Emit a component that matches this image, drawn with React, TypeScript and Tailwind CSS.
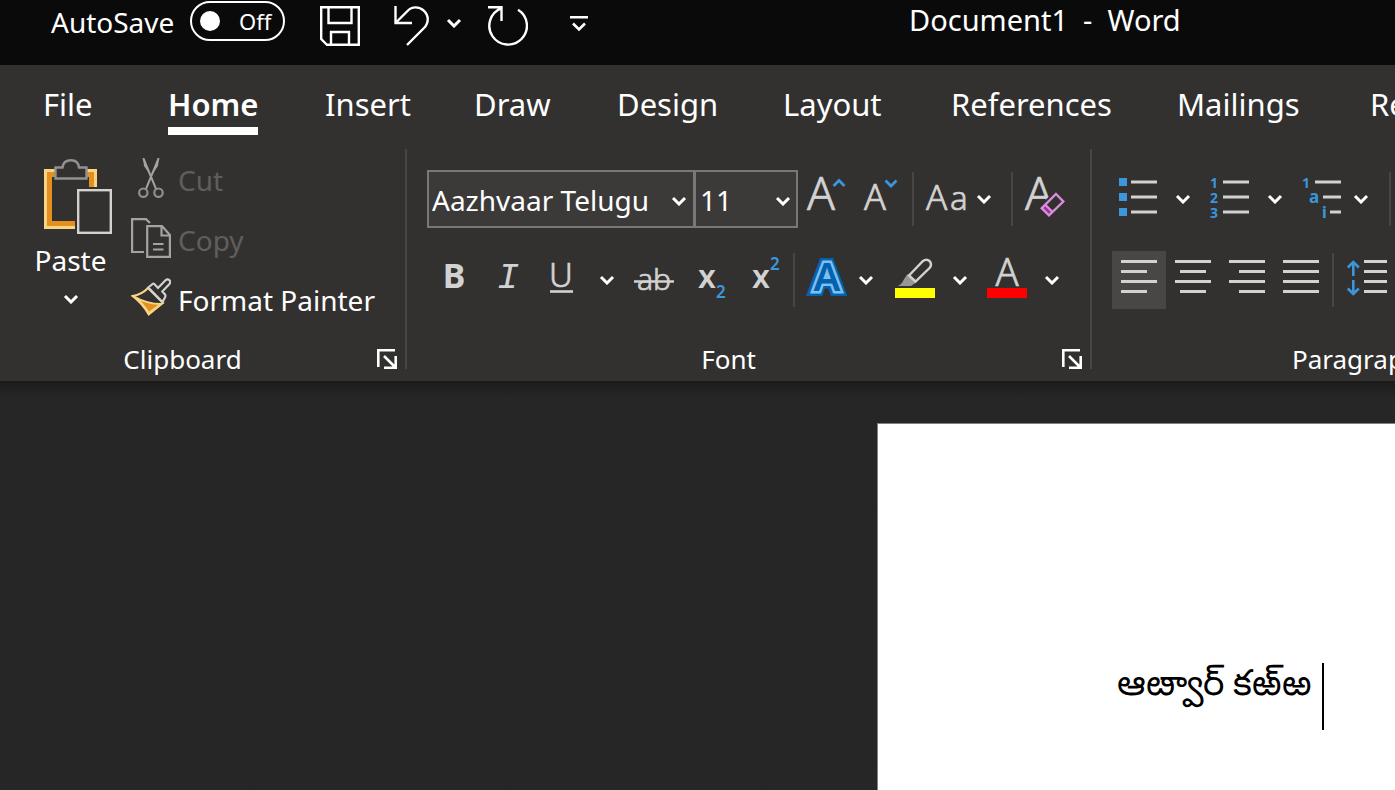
import React, { useState } from "react";

type IconProps = { children: React.ReactNode; className?: string };

/** Ribbon glyph on a 40x44 canvas. */
function Glyph({ children, className = "" }: IconProps) {
  return (
    <svg
      aria-hidden="true"
      width="40"
      height="44"
      viewBox="0 0 40 44"
      fill="none"
      className={`shrink-0 overflow-visible ${className}`}
    >
      {children}
    </svg>
  );
}

type LetterProps = { x: number; y: number; size: number; anchor?: "start" | "middle"; children: string };

/** Light-weight grey letter used inside ribbon glyphs. */
function Letter({ x, y, size, anchor = "start", children }: LetterProps) {
  return (
    <text x={x} y={y} fontSize={size} fontWeight="300" textAnchor={anchor} fill="#d2d2d2" stroke="#d2d2d2" strokeWidth="0.7">
      {children}
    </text>
  );
}

function Chevron({ className = "" }: { className?: string }) {
  return (
    <svg aria-hidden="true" width="16" height="10" viewBox="0 0 16 10" fill="none" className={`shrink-0 ${className}`}>
      <path d="M2 2L8 8L14 2" stroke="#fff" strokeWidth="3" />
    </svg>
  );
}

function Tool({ label, children, active = false }: { label: string; children: React.ReactNode; active?: boolean }) {
  return (
    <button
      type="button"
      aria-label={label}
      className={`flex h-[58px] w-[54px] shrink-0 items-center justify-center ${active ? "bg-[#484746]" : ""}`}
    >
      {children}
    </button>
  );
}

function More({ label, narrow = false }: { label: string; narrow?: boolean }) {
  return (
    <button
      type="button"
      aria-label={label}
      className={`flex h-14 shrink-0 items-center justify-center ${narrow ? "w-6" : "w-9"}`}
    >
      <Chevron />
    </button>
  );
}

function Divider() {
  return <div className="h-[54px] w-0.5 shrink-0 bg-[#484644]" />;
}

function Group({ title, className, children }: { title: string; className: string; children: React.ReactNode }) {
  return (
    <section aria-label={title} className={`flex h-[220px] shrink-0 flex-col border-r-2 border-[#484644] ${className}`}>
      <div className="flex-1">{children}</div>
      <div className="flex h-5 items-center">
        <h2 className="flex-1 text-center text-[26px] leading-5">{title}</h2>
        <button type="button" aria-label={`${title} settings`} className="mr-2 ml-3 h-5 w-5">
          <svg aria-hidden="true" width="20" height="20" viewBox="0 0 20 20" fill="none" stroke="#fff" strokeWidth="2.6">
            <path d="M1.300 18V1.300H18M18.700 7V18.700H7M7 7L18 18" />
          </svg>
        </button>
      </div>
    </section>
  );
}

const tabs = [
  { name: "File", width: "w-[125px]" },
  { name: "Home", width: "w-[157px]" },
  { name: "Insert", width: "w-[149px]" },
  { name: "Draw", width: "w-[143px]" },
  { name: "Design", width: "w-[166px]" },
  { name: "Layout", width: "w-[168px]" },
  { name: "References", width: "w-[226px]" },
  { name: "Mailings", width: "w-[193px]" },
  { name: "Review", width: "w-[150px]" },
];

function TitleBar() {
  const [autoSave, setAutoSave] = useState(false);
  return (
    <header className="flex h-[65px] shrink-0 items-start bg-[#0a0a0a]">
      <div className="flex h-[42px] shrink-0 items-center pl-[51px]">
        <span id="autosave" className="w-[139px] pt-0.5 text-[28px]">AutoSave</span>
        <button
          type="button"
          role="switch"
          aria-checked={autoSave}
          aria-labelledby="autosave"
          onClick={() => setAutoSave(!autoSave)}
          className="flex h-10 w-[95px] items-center gap-[19px] rounded-full border-2 border-white pl-2 text-[22px]"
        >
          <span className="h-5 w-5 rounded-full bg-white" />
          {autoSave ? "On" : "Off"}
        </button>
      </div>
      <div className="flex h-[52px] shrink-0 items-center pl-[35px]">
        <button type="button" aria-label="Save">
          <svg aria-hidden="true" width="40" height="40" viewBox="0 0 40 40" fill="none" stroke="#fff" strokeWidth="2.4">
            <path d="M1.200 1.200H38.800V38.800H7L1.200 33Z M8.500 1V17H31.500V1 M11 39V26H29V39" />
          </svg>
        </button>
        <button type="button" aria-label="Undo" className="ml-[34px]">
          <svg aria-hidden="true" width="36" height="40" viewBox="0 0 36 40" fill="none" stroke="#fff" strokeWidth="2.4">
            <path d="M1.500 0V17H18M2 16.500L13.500 5C18 .2 25 .2 30 4.800S35 17 30 22L13 39" />
          </svg>
        </button>
        <button type="button" aria-label="Undo history" className="ml-4 flex h-10 items-center pb-1.5">
          <Chevron />
        </button>
        <button type="button" aria-label="Repeat" className="ml-[26px]">
          <svg aria-hidden="true" width="40" height="40" viewBox="0 0 40 40" fill="none" stroke="#fff" strokeWidth="2.4">
            <path d="M30 3.800A18.800 18.800 0 1 1 13 2.400M0 1.200H13.500V15" />
          </svg>
        </button>
        <button type="button" aria-label="Customize toolbar" className="ml-[41px] flex h-10 items-center pb-1">
          <svg aria-hidden="true" width="20" height="18" viewBox="0 0 20 18" fill="none" stroke="#fff" strokeWidth="2.600">
            <path d="M1 2.300H19M4 8.500L10 14.500L16 8.500" />
          </svg>
        </button>
      </div>
      <h1 className="shrink-0 pl-[320px] text-[29px] leading-10 whitespace-pre">Document1  -  Word</h1>
    </header>
  );
}

function Tabs() {
  return (
    <nav aria-label="Ribbon tabs" className="flex h-[84px] items-start pt-[18px] pl-[43px]">
      {tabs.map((tab) => (
        <div key={tab.name} className={`shrink-0 ${tab.width}`}>
          <a
            href={`#${tab.name.toLowerCase()}`}
            className={`inline-block h-[52px] text-[31px] leading-[42px] ${
              tab.name === "Home" ? "border-b-8 border-white font-semibold" : ""
            }`}
          >
            {tab.name}
          </a>
        </div>
      ))}
    </nav>
  );
}

function Clipboard() {
  return (
    <Group title="Clipboard" className="w-[407px]">
      <div className="flex pt-px">
        <button type="button" className="flex w-[131px] shrink-0 flex-col items-center pt-[9px] pr-[14px] pl-6">
          <svg aria-hidden="true" width="68" height="76" viewBox="0 0 68 76" fill="none" className="ml-[14px]">
            <path d="M11 14H4V66H31M43 14H49V28" stroke="#f8d583" strokeWidth="8" />
            <path d="M11 15.500H5.500V64.500H31M43 15.500H47.500V28" stroke="#e39021" strokeWidth="5" />
            <path
              d="M11.500 8.500H18.500C19 4 22 1.200 27 1.200S34.500 4 35 8.500H42.500V19.500H11.500Z"
              fill="#323130"
              stroke="#919191"
              strokeWidth="2.400"
            />
            <rect x="34.200" y="31.200" width="32.600" height="42.600" fill="#323130" stroke="#d2d2d2" strokeWidth="2.400" />
          </svg>
          <span className="mt-[7px] text-[28px] leading-9">Paste</span>
          <Chevron className="mt-4" />
        </button>
        <div className="flex flex-col">
          <button type="button" disabled className="flex h-[60px] items-center gap-[7px] text-[28px] text-[#605e5c]">
            <svg aria-hidden="true" width="40" height="40" viewBox="0 0 40 40" fill="none" className="mb-1">
              <path d="M12.300 0L25.200 31.300M27.700 0L14.800 31.300" stroke="#a3a3a3" strokeWidth="2" />
              <path d="M12 0L13 8L20 18ZM28 0L27 8L20 18Z" fill="#a3a3a3" />
              <circle cx="12.300" cy="34.700" r="4.200" stroke="#8f8f8f" strokeWidth="2.200" />
              <circle cx="27.500" cy="34.700" r="4.200" stroke="#8f8f8f" strokeWidth="2.200" />
            </svg>
            Cut
          </button>
          <button type="button" disabled className="flex h-[60px] items-center gap-[7px] text-[28px] text-[#605e5c]">
            <svg aria-hidden="true" width="40" height="40" viewBox="0 0 40 40" fill="none" stroke="#a3a3a3" strokeWidth="2.200" className="mb-1">
              <path d="M13 34H1.100V1.100H15L19 5M16.200 8.100H31L38.900 17V38.900H16.200ZM30.500 8V17.500H39M22 26H32.500M22 31.500H32.500" />
            </svg>
            Copy
          </button>
          <button type="button" className="flex h-[60px] items-center gap-[7px] text-[28px]">
            <svg aria-hidden="true" width="40" height="40" viewBox="0 0 40 40" fill="none" className="mb-1">
              <path d="M1.500 18Q11 16.500 17 10L32 25L17.700 36.500Q11 25 1.500 18Z" fill="#323130" stroke="#f8d583" strokeWidth="2" />
              <path d="M3 18.500Q16 26 30 26L17.700 35Q12 25 3 18.500Z" fill="#e39021" stroke="#f8d583" strokeWidth="2" />
              <path
                d="M17.300 9.500L21.500 6Q22.500 5.200 23.500 6.200L27 10L34.500 2.200Q36.500.400 38.500 2.200Q40 4.200 38.200 6.200L31.300 13.500L34 16.500Q34.800 17.600 34.200 19L31.500 24Z"
                fill="#323130"
                stroke="#d2d2d2"
                strokeWidth="2.200"
              />
            </svg>
            Format Painter
          </button>
        </div>
      </div>
    </Group>
  );
}

const comboClass =
  "h-[58px] w-full appearance-none border-2 border-[#7a7876] bg-[#3b3a39] pt-0.5 text-[28px] text-white outline-none";

function FontGroup() {
  return (
    <Group title="Font" className="w-[685px]">
      <div className="mt-[21px] flex h-[58px] items-center pl-5">
        <label className="relative w-[268px] shrink-0">
          <select aria-label="Font family" className={`pl-[3px] ${comboClass}`}>
            <option>Aazhvaar Telugu</option>
          </select>
          <Chevron className="pointer-events-none absolute top-[26px] right-2" />
        </label>
        <label className="relative -ml-px w-[104px] shrink-0">
          <select aria-label="Font size" className={`pl-1 ${comboClass}`}>
            <option>11</option>
          </select>
          <Chevron className="pointer-events-none absolute top-[26px] right-[7px]" />
        </label>
        <div className="ml-0.5">
          <Tool label="Increase font size">
            <Glyph>
              <Letter x={0} y={33} size={46}>A</Letter>
              <path d="M26.500 9L32 3.500L37.500 9" stroke="#3a96dd" strokeWidth="2.800" />
            </Glyph>
          </Tool>
        </div>
        <Tool label="Decrease font size">
          <Glyph className="ml-1">
            <Letter x={1} y={33} size={36}>A</Letter>
            <path d="M22.500 3.500L28 9L33.500 3.500" stroke="#3a96dd" strokeWidth="2.800" />
          </Glyph>
        </Tool>
        <div className="ml-1">
          <Divider />
        </div>
        <button type="button" aria-label="Change case" className="ml-3 flex h-14 shrink-0 items-center">
          <Glyph>
            <Letter x={0} y={33} size={35}>A</Letter>
            <Letter x={24} y={33} size={33}>a</Letter>
          </Glyph>
          <Chevron className="ml-2.5" />
        </button>
        <div className="ml-[19px]">
          <Divider />
        </div>
        <button type="button" aria-label="Clear formatting" className="ml-3 shrink-0">
          <Glyph>
            <Letter x={0} y={33} size={46}>A</Letter>
            <path d="M31 13L42 25L24 43L12 31Z" fill="#323130" />
            <path d="M20 27L28 35L24 38.500L16.500 31Z" fill="#9a2da0" />
            <path d="M31 17L38.300 24.500L24 38.300L16.700 31.200ZM20 27.500L27.500 35" stroke="#d88ddb" strokeWidth="2.400" />
          </Glyph>
        </button>
      </div>
      <div className="mt-[23px] flex h-[58px] items-center pl-5">
        <Tool label="Bold">
          <Glyph>
            <text x="20" y="30" textAnchor="middle" fontSize="34" fontWeight="700" fill="#d2d2d2">B</text>
          </Glyph>
        </Tool>
        <Tool label="Italic">
          <Glyph>
            <text x="20" y="30" textAnchor="middle" fontSize="37" fontStyle="italic" fontFamily="Liberation Mono, monospace" fill="#d2d2d2">I</text>
          </Glyph>
        </Tool>
        <Tool label="Underline">
          <Glyph>
            <Letter x={19} y={29} size={33} anchor="middle">U</Letter>
            <path d="M8 33.500H31" stroke="#d2d2d2" strokeWidth="2.600" />
          </Glyph>
        </Tool>
        <More label="Underline styles" />
        <div className="ml-0.5">
          <Tool label="Strikethrough">
            <Glyph>
              <Letter x={20} y={32} size={30} anchor="middle">ab</Letter>
              <path d="M0 23.500H40" stroke="#d2d2d2" strokeWidth="2.400" />
            </Glyph>
          </Tool>
        </div>
        <Tool label="Subscript">
          <Glyph>
            <text x="10" y="30" fontSize="32" fontWeight="600" fill="#d2d2d2">x</text>
            <text x="28" y="40" fontSize="17" fontWeight="600" fill="#3a96dd">2</text>
          </Glyph>
        </Tool>
        <Tool label="Superscript">
          <Glyph>
            <text x="10" y="30" fontSize="32" fontWeight="600" fill="#d2d2d2">x</text>
            <text x="28" y="12" fontSize="17" fontWeight="600" fill="#3a96dd">2</text>
          </Glyph>
        </Tool>
        <div className="mr-[5px] ml-1">
          <Divider />
        </div>
        <Tool label="Text effects">
          <Glyph>
            <g fontSize="40" fontWeight="600" textAnchor="middle">
              <text x="20" y="33" fill="#0063b1" stroke="#0063b1" strokeWidth="10">A</text>
              <text x="20" y="33" fill="#83beec" stroke="#83beec" strokeWidth="5">A</text>
              <text x="20" y="33" fill="#0063b1">A</text>
            </g>
          </Glyph>
        </Tool>
        <More label="Text effect styles" narrow />
        <div className="ml-2.5">
          <Tool label="Highlight">
            <Glyph>
              <path d="M2.700 28Q7 26 8.500 22L12.500 16L21 24.500L16 28Z" fill="#979797" />
              <path d="M14 17.500L28 3Q31.500.300 34.500 3Q37.200 6 35 9.500L20.500 23.500Z" fill="#323130" stroke="#d2d2d2" strokeWidth="2.400" />
              <path d="M0 30H40V40H0Z" fill="#ff0" />
            </Glyph>
          </Tool>
        </div>
        <More label="Highlight colors" />
        <div className="ml-0.5">
          <Tool label="Font color">
            <Glyph>
              <Letter x={20} y={28} size={38} anchor="middle">A</Letter>
              <path d="M0 30H40V40H0Z" fill="#f00" />
            </Glyph>
          </Tool>
        </div>
        <More label="Font colors" />
      </div>
    </Group>
  );
}

function Paragraph() {
  return (
    <Group title="Paragraph" className="w-[570px]">
      <div className="mt-[21px] flex h-[58px] items-center pl-[19px]">
        <Tool label="Bullets">
          <Glyph>
            <path d="M1 1H9V9H1ZM1 16H9V24H1ZM1 31H9V39H1Z" fill="#3a96dd" />
            <path d="M13 5H39M13 20H39M13 35H39" stroke="#d2d2d2" strokeWidth="2.800" />
          </Glyph>
        </Tool>
        <More label="Bullet styles" />
        <div className="ml-0.5">
          <Tool label="Numbering">
            <Glyph>
              <g fontSize="14" fontWeight="700" fill="#3a96dd">
                <text x="0" y="11">1</text>
                <text x="0" y="26">2</text>
                <text x="0" y="41">3</text>
              </g>
              <path d="M13 5H39M13 20H39M13 35H39" stroke="#d2d2d2" strokeWidth="2.800" />
            </Glyph>
          </Tool>
        </div>
        <More label="Numbering styles" />
        <div className="ml-0.5">
          <Tool label="Multilevel list">
            <Glyph>
              <g fontWeight="700" fill="#3a96dd">
                <text x="0" y="11" fontSize="14">1</text>
                <text x="7" y="26" fontSize="17">a</text>
                <text x="20" y="41" fontSize="16">i</text>
              </g>
              <path d="M13 5H39M21 20H39M28 35H39" stroke="#d2d2d2" strokeWidth="2.800" />
            </Glyph>
          </Tool>
        </div>
        <More label="Multilevel styles" narrow />
        <div className="ml-4">
          <Divider />
        </div>
      </div>
      <div className="mt-[23px] flex h-[58px] items-center pl-5">
        <Tool label="Align left" active>
          <Glyph>
            <path d="M2 3.500H38M2 13.500H28M2 23.500H38M2 33.500H28" stroke="#d2d2d2" strokeWidth="2.800" />
          </Glyph>
        </Tool>
        <Tool label="Center">
          <Glyph>
            <path d="M2 3.500H38M7 13.500H33M2 23.500H38M7 33.500H33" stroke="#d2d2d2" strokeWidth="2.800" />
          </Glyph>
        </Tool>
        <Tool label="Align right">
          <Glyph>
            <path d="M2 3.500H38M12 13.500H38M2 23.500H38M12 33.500H38" stroke="#d2d2d2" strokeWidth="2.800" />
          </Glyph>
        </Tool>
        <Tool label="Justify">
          <Glyph>
            <path d="M2 3.500H38M2 13.500H38M2 23.500H38M2 33.500H38" stroke="#d2d2d2" strokeWidth="2.800" />
          </Glyph>
        </Tool>
        <div className="mr-1.5 ml-1">
          <Divider />
        </div>
        <Tool label="Line spacing">
          <Glyph>
            <path d="M17 3.500H40M17 13.500H40M17 23.500H40M17 33.500H40" stroke="#d2d2d2" strokeWidth="2.800" />
            <path d="M6.300 18V4M.8 9.500L6.300 4L11.800 9.500M6.300 22V36M.8 30.500L6.300 36L11.800 30.500" stroke="#3a96dd" strokeWidth="2.600" />
          </Glyph>
        </Tool>
        <More label="Line spacing options" narrow />
      </div>
    </Group>
  );
}

export default function App() {
  return (
    <div className="flex h-screen flex-col overflow-hidden bg-[#262626] font-['Noto_Sans','Open_Sans',sans-serif] text-white">
      <TitleBar />
      <div className="h-[316px] shrink-0 overflow-hidden bg-[#323130]">
        <Tabs />
        <div className="flex">
          <Clipboard />
          <FontGroup />
          <Paragraph />
        </div>
      </div>
      <main className="flex flex-1 bg-linear-to-b from-[#1b1b1b] to-[#262626] to-[16px] pt-[42px] pl-[877px]">
        <article className="flex flex-1 items-start border-t border-l border-[#808080] bg-white pt-[239px] pl-[239px] text-black">
          <p lang="te" className="text-[36px] leading-[38px] font-medium whitespace-nowrap">ఆఴ్వార్ కఱ్{"\u200c"}ఱ</p>
          <span className="ml-2.5 h-[67px] w-0.5 shrink-0 bg-black" />
        </article>
      </main>
    </div>
  );
}
